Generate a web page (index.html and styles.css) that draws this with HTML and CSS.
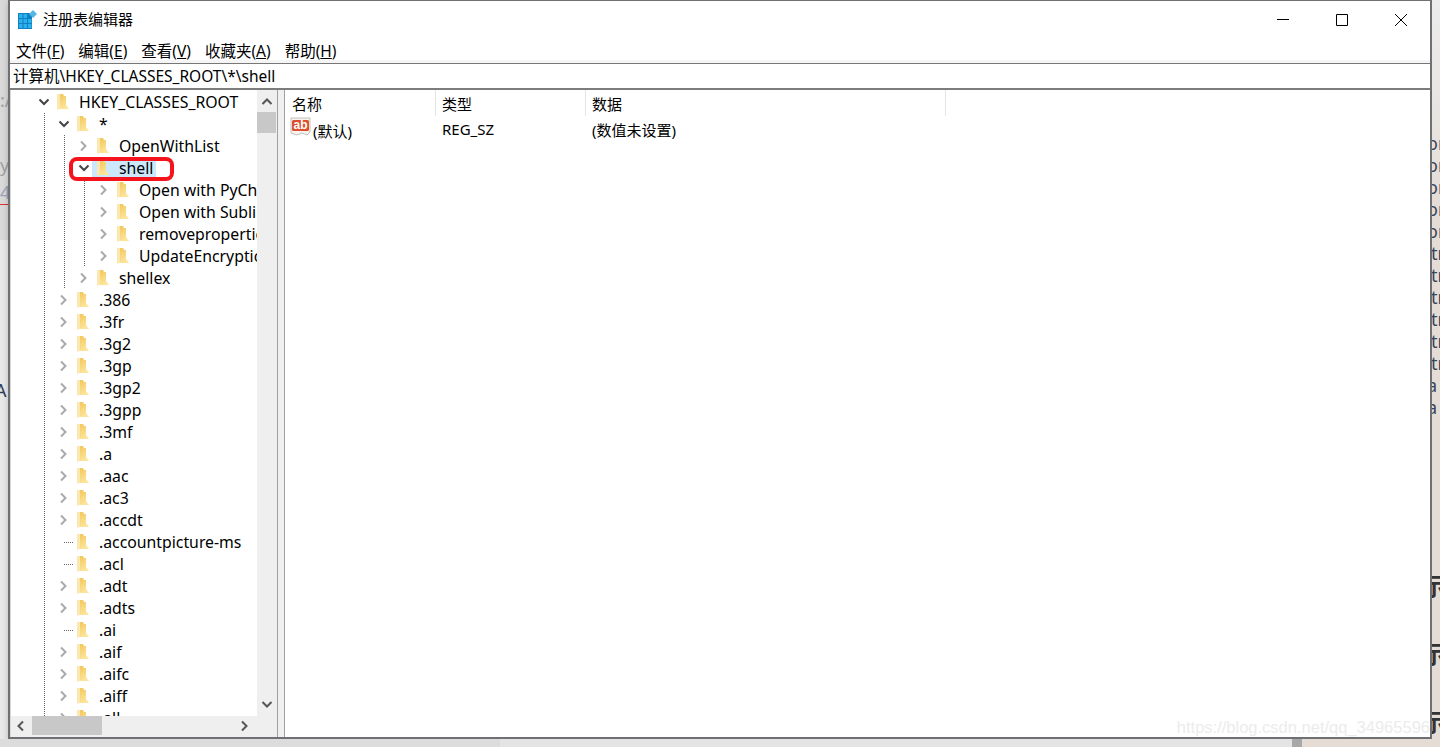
FILE: index.html
```html
<!DOCTYPE html>
<html lang="zh-CN">
<head>
  <meta charset="UTF-8" />
  <title>注册表编辑器</title>
  <link rel="stylesheet" href="styles.css">
</head>
<body>

  <svg class="sprites" width="0" height="0">
    <linearGradient id="folderFill" x1="0" y1="0" x2="0.4" y2="1">
      <stop offset="0" stop-color="#f2c75c"/>
      <stop offset="1" stop-color="#fde59c"/>
    </linearGradient>
    <symbol id="folder" viewBox="0 0 12 20">
      <path d="M0 2h6l1 2v13H1.500L0 18.500z" fill="#fbe7b0"/>
      <path d="M3 17V2h3l1 2h2v9l3 4z" fill="url(#folderFill)"/>
    </symbol>
    <symbol id="open" viewBox="0 0 12 12"><path d="M1.500 3.500 6 8l4.500-4.500" fill="none" stroke="#444" stroke-width="2"/></symbol>
    <symbol id="closed" viewBox="0 0 12 12"><path d="M3 1.500 7.500 6 3 10.500" fill="none" stroke="#aaa" stroke-width="2"/></symbol>
  </svg>

  <div class="desk">
    <div class="strip strip-left">
      <p>:/</p><p class="y">y</p><p class="typo">4i</p><p class="letter-a">A</p>
    </div>

    <div class="window">
      <div class="titlebar">
        <svg class="app-icon" viewBox="0 0 20 20">
          <path d="M0 3h14v16H0z" fill="#0f80c1"/>
          <path d="M1 4h3.500v4H1zM5.500 4H9v4H5.500zM1 9h3.500v4H1zM5.500 9H9v4H5.500zM10 9h3.500v4H10zM1 14h3.500v4H1zM5.500 14H9v4H5.500zM10 14h3.500v4H10z" fill="#2bb0ec"/>
          <path d="M15 0l4 4-4 4-4-4z" fill="#55b5e5"/>
        </svg>
        <span class="title">注册表编辑器</span>
        <div class="win-buttons">
          <svg viewBox="0 0 12 12"><path d="M0 5.500h12" stroke="#000"/></svg>
          <svg viewBox="0 0 12 12"><path d="M.5.500h11v11H.5z" fill="none" stroke="#000"/></svg>
          <svg viewBox="0 0 12 12"><path d="M0 0l12 12M12 0L0 12" stroke="#000"/></svg>
        </div>
      </div>

      <div class="menubar">
        <span class="menu">文件(<u>F</u>)</span>
        <span class="menu">编辑(<u>E</u>)</span>
        <span class="menu">查看(<u>V</u>)</span>
        <span class="menu">收藏夹(<u>A</u>)</span>
        <span class="menu">帮助(<u>H</u>)</span>
      </div>

      <div class="address">计算机\HKEY_CLASSES_ROOT\*\shell</div>

      <div class="panes">
        <div class="tree-pane">
          <div class="tree-main">
            <div class="tree">
              <div class="row"><svg class="chev"><use href="#open"/></svg><svg class="folder"><use href="#folder"/></svg><span class="label">HKEY_CLASSES_ROOT</span></div>
              <div class="row"><i class="guide"></i><svg class="chev"><use href="#open"/></svg><svg class="folder"><use href="#folder"/></svg><span class="label">*</span></div>
              <div class="row"><i class="guide"></i><i class="guide"></i><svg class="chev"><use href="#closed"/></svg><svg class="folder"><use href="#folder"/></svg><span class="label">OpenWithList</span></div>
              <div class="row"><i class="guide"></i><i class="guide"></i><svg class="chev"><use href="#open"/></svg><span class="sel"><svg class="folder"><use href="#folder"/></svg><span class="label">shell</span></span><div class="redbox"></div></div>
              <div class="row"><i class="guide"></i><i class="guide"></i><i class="guide"></i><svg class="chev"><use href="#closed"/></svg><svg class="folder"><use href="#folder"/></svg><span class="label">Open with PyCharm</span></div>
              <div class="row"><i class="guide"></i><i class="guide"></i><i class="guide"></i><svg class="chev"><use href="#closed"/></svg><svg class="folder"><use href="#folder"/></svg><span class="label">Open with Sublime Text</span></div>
              <div class="row"><i class="guide"></i><i class="guide"></i><i class="guide"></i><svg class="chev"><use href="#closed"/></svg><svg class="folder"><use href="#folder"/></svg><span class="label">removeproperties</span></div>
              <div class="row"><i class="guide"></i><i class="guide"></i><i class="guide"></i><svg class="chev"><use href="#closed"/></svg><svg class="folder"><use href="#folder"/></svg><span class="label">UpdateEncryptionSettings</span></div>
              <div class="row"><i class="guide"></i><i class="guide"></i><svg class="chev"><use href="#closed"/></svg><svg class="folder"><use href="#folder"/></svg><span class="label">shellex</span></div>
              <div class="row"><i class="guide"></i><svg class="chev"><use href="#closed"/></svg><svg class="folder"><use href="#folder"/></svg><span class="label">.386</span></div>
              <div class="row"><i class="guide"></i><svg class="chev"><use href="#closed"/></svg><svg class="folder"><use href="#folder"/></svg><span class="label">.3fr</span></div>
              <div class="row"><i class="guide"></i><svg class="chev"><use href="#closed"/></svg><svg class="folder"><use href="#folder"/></svg><span class="label">.3g2</span></div>
              <div class="row"><i class="guide"></i><svg class="chev"><use href="#closed"/></svg><svg class="folder"><use href="#folder"/></svg><span class="label">.3gp</span></div>
              <div class="row"><i class="guide"></i><svg class="chev"><use href="#closed"/></svg><svg class="folder"><use href="#folder"/></svg><span class="label">.3gp2</span></div>
              <div class="row"><i class="guide"></i><svg class="chev"><use href="#closed"/></svg><svg class="folder"><use href="#folder"/></svg><span class="label">.3gpp</span></div>
              <div class="row"><i class="guide"></i><svg class="chev"><use href="#closed"/></svg><svg class="folder"><use href="#folder"/></svg><span class="label">.3mf</span></div>
              <div class="row"><i class="guide"></i><svg class="chev"><use href="#closed"/></svg><svg class="folder"><use href="#folder"/></svg><span class="label">.a</span></div>
              <div class="row"><i class="guide"></i><svg class="chev"><use href="#closed"/></svg><svg class="folder"><use href="#folder"/></svg><span class="label">.aac</span></div>
              <div class="row"><i class="guide"></i><svg class="chev"><use href="#closed"/></svg><svg class="folder"><use href="#folder"/></svg><span class="label">.ac3</span></div>
              <div class="row"><i class="guide"></i><svg class="chev"><use href="#closed"/></svg><svg class="folder"><use href="#folder"/></svg><span class="label">.accdt</span></div>
              <div class="row"><i class="guide"></i><span class="leaf"></span><svg class="folder"><use href="#folder"/></svg><span class="label">.accountpicture-ms</span></div>
              <div class="row"><i class="guide"></i><span class="leaf"></span><svg class="folder"><use href="#folder"/></svg><span class="label">.acl</span></div>
              <div class="row"><i class="guide"></i><svg class="chev"><use href="#closed"/></svg><svg class="folder"><use href="#folder"/></svg><span class="label">.adt</span></div>
              <div class="row"><i class="guide"></i><svg class="chev"><use href="#closed"/></svg><svg class="folder"><use href="#folder"/></svg><span class="label">.adts</span></div>
              <div class="row"><i class="guide"></i><span class="leaf"></span><svg class="folder"><use href="#folder"/></svg><span class="label">.ai</span></div>
              <div class="row"><i class="guide"></i><svg class="chev"><use href="#closed"/></svg><svg class="folder"><use href="#folder"/></svg><span class="label">.aif</span></div>
              <div class="row"><i class="guide"></i><svg class="chev"><use href="#closed"/></svg><svg class="folder"><use href="#folder"/></svg><span class="label">.aifc</span></div>
              <div class="row"><i class="guide"></i><svg class="chev"><use href="#closed"/></svg><svg class="folder"><use href="#folder"/></svg><span class="label">.aiff</span></div>
              <div class="row"><i class="guide"></i><svg class="chev"><use href="#closed"/></svg><svg class="folder"><use href="#folder"/></svg><span class="label">.all</span></div>
            </div>
            <div class="vscroll">
              <svg viewBox="0 0 12 12"><path d="M1.500 8 6 3.500 10.500 8" fill="none" stroke="#555" stroke-width="2"/></svg>
              <div class="vthumb"></div>
              <svg class="vdown" viewBox="0 0 12 12"><path d="M1.500 4 6 8.500 10.500 4" fill="none" stroke="#555" stroke-width="2"/></svg>
            </div>
          </div>
          <div class="hscroll">
            <svg viewBox="0 0 12 12"><path d="M8 1.500 3.500 6 8 10.500" fill="none" stroke="#555" stroke-width="2"/></svg>
            <div class="hthumb"></div>
            <svg class="hright" viewBox="0 0 12 12"><path d="M4 1.500 8.500 6 4 10.500" fill="none" stroke="#555" stroke-width="2"/></svg>
          </div>
        </div>

        <div class="list-pane">
          <div class="list-head">
            <span class="col col-name">名称</span>
            <span class="col col-type">类型</span>
            <span class="col col-data">数据</span>
          </div>
          <div class="list-row">
            <span class="cell col-name">
              <svg class="ab-icon" viewBox="0 0 22 20">
                <path d="M1 1h19v14l-3 3-5-2-5 2-6-2z" fill="#f7f3ef" stroke="#c4bfba"/>
                <rect x="2" y="3" width="17" height="11" rx="1.500" fill="#dc4f2e"/>
                <text x="3.500" y="12" class="ab-text">ab</text>
              </svg>(默认)
            </span>
            <span class="cell col-type">REG_SZ</span>
            <span class="cell col-data">(数值未设置)</span>
          </div>
          <div class="watermark">https://blog.csdn.net/qq_34965596</div>
        </div>
      </div>
    </div>

    <div class="strip strip-right">
      <div class="lines">
        <p class="cut">or</p><p class="cut">or</p><p class="cut">or</p><p class="cut">or</p><p class="cut">or</p>
        <p>tr</p><p>tr</p><p>tr</p><p>tr</p><p>tr</p><p>tr</p>
        <p class="cut">a</p><p class="cut">a</p>
      </div>
      <div class="heads">
        <p>示</p><p>示</p><p>示</p>
      </div>
    </div>
  </div>

  <div class="under">
    <div class="under-left"></div>
    <div class="under-mid"></div>
    <div class="under-bar"></div>
    <div class="under-right"></div>
  </div>

</body>
</html>
```

FILE: styles.css
```css
* { box-sizing: border-box; }
html, body {
  margin: 0;
  padding: 0;
  height: 747px;
  overflow: hidden;
}
body {
  font-family: "Noto Sans", "Noto Sans CJK SC", sans-serif;
  font-size: 15px;
  color: #000;
  background: #e4dcd5;
}
.sprites { position: absolute; }
.desk {
  display: flex;
  height: 739px;
}

/* page behind the window */
.strip { overflow: hidden; }
.strip p { margin: 0; }
.strip-left {
  width: 8px;
  flex: none;
  background: linear-gradient(#d9d9d9 240px, #e8e8e8 240px);
  padding-top: 88px;
  font-size: 18px;
  color: #a0a0a0;
}
.strip-left p { height: 24px; line-height: 24px; }
.strip-left .y { margin-top: 41px; }
.strip-left .typo {
  margin-top: 3px;
  height: 25px;
  color: #9aa3b8;
  border-bottom: 1px solid #e03030;
}
.strip-left .letter-a { margin-top: 173px; margin-left: -5px; color: #2f3f58; }
.strip-right {
  width: 9px;
  flex: none;
  background: linear-gradient(#ececec, #e4dcd5 30%);
}
.lines { padding-top: 132px; font-size: 18px; color: #36465e; }
.lines p { height: 22px; line-height: 22px; margin-left: -1px; }
.lines .cut { margin-left: -5px; }
.heads { padding-top: 134px; font-size: 24px; font-weight: 700; color: #333; }
.heads p { height: 68px; line-height: 68px; margin-left: -10px; }

/* window */
.window {
  width: 1424px;
  flex: none;
  display: flex;
  flex-direction: column;
  background: #fff;
  border: 2px solid #6e7073;
  border-top-width: 1px;
  box-shadow: 0 2px 6px rgba(0, 0, 0, 0.2);
}
.titlebar {
  height: 37px;
  flex: none;
  display: flex;
  align-items: center;
  padding-left: 8px;
}
.app-icon { width: 20px; height: 20px; margin-right: 5px; }
.title { font-size: 15px; padding-bottom: 2px; }
.win-buttons {
  margin-left: auto;
  display: flex;
  align-items: center;
  gap: 47px;
  padding-right: 23px;
}
.win-buttons svg { width: 12px; height: 12px; }
.menubar {
  height: 26px;
  flex: none;
  display: flex;
  align-items: center;
  padding-left: 6px;
  background: linear-gradient(#fff 22px, #f5f5f5 22px);
  border-bottom: 1px solid #777;
  gap: 14px;
}
.menu { font-size: 15.500px; line-height: 20px; }
.address {
  height: 26px;
  flex: none;
  padding-left: 3px;
  line-height: 24px;
  font-size: 15.500px;
  border-bottom: 2px solid #7c7c7c;
  white-space: nowrap;
}
.panes {
  flex: 1;
  display: flex;
  min-height: 0;
  background: #f0f0f0;
}

/* left tree */
.tree-pane {
  width: 268px;
  flex: none;
  display: flex;
  flex-direction: column;
  border-right: 1px solid #a0a0a0;
  border-left: 1px solid #d8d8d8;
  padding-bottom: 2px;
  background: #efefef;
}
.tree-main {
  flex: 1;
  display: flex;
  min-height: 0;
}
.tree {
  flex: 1;
  min-width: 0;
  background: #fff;
  overflow: hidden;
  padding-left: 23px;
  padding-top: 1px;
}
.row {
  position: relative;
  height: 22px;
  display: flex;
  align-items: center;
  white-space: nowrap;
}
.guide {
  width: 20px;
  height: 22px;
  flex: none;
  background: linear-gradient(#666 50%, transparent 50%) 10px 0 / 1px 2px repeat-y;
}
.chev {
  width: 12px;
  height: 12px;
  margin: 0 4px;
  flex: none;
}
.leaf {
  width: 20px;
  height: 1px;
  flex: none;
  padding-left: 10px;
  background: linear-gradient(90deg, #666 50%, transparent 50%) 0 0 / 2px 1px repeat-x;
  background-clip: content-box;
}
.folder {
  width: 12px;
  height: 20px;
  flex: none;
  margin-left: 3px;
}
.label {
  margin-left: 10px;
  font-size: 15.800px;
  line-height: 22px;
}
.sel {
  display: flex;
  align-items: center;
  height: 18px;
  margin-left: -2px;
  padding: 0 3px 0 2px;
  background: #cce8ff;
}
.sel .label { line-height: 18px; }
.redbox {
  position: absolute;
  left: 35px;
  top: 0;
  width: 105px;
  height: 24px;
  border: 4px solid #f5141c;
  border-radius: 8px;
}
.vscroll {
  width: 19px;
  flex: none;
  margin-right: 1px;
  display: flex;
  flex-direction: column;
  align-items: center;
  padding-top: 6px;
}
.vscroll svg { width: 12px; height: 12px; flex: none; }
.vthumb {
  width: 100%;
  height: 21px;
  margin-top: 4px;
  background: #c8c8c8;
}
.vdown { margin-top: auto; margin-bottom: 6px; }
.hscroll {
  height: 19px;
  flex: none;
  display: flex;
  align-items: center;
  padding: 0 27px 0 4px;
}
.hscroll svg { width: 12px; height: 12px; flex: none; }
.hthumb {
  width: 70px;
  height: 100%;
  margin-left: 5px;
  background: #c8c8c8;
}
.hright { margin-left: auto; }

/* right list */
.list-pane {
  position: relative;
  flex: 1;
  margin-left: 6px;
  border-left: 1px solid #a0a0a0;
  background: #fff;
}
.list-head {
  height: 26px;
  display: flex;
  align-items: center;
  font-size: 15px;
}
.col { height: 100%; display: flex; align-items: center; flex: none; }
.col-name { width: 151px; padding-left: 7px; }
.col-type { width: 150px; padding-left: 6px; }
.col-data { width: 360px; padding-left: 6px; }
.list-head .col { border-right: 1px solid #e5e5e5; }
.list-row {
  height: 22px;
  margin-top: 2px;
  display: flex;
  align-items: center;
  font-size: 15px;
}
.cell { white-space: nowrap; }
.list-row .col-name { padding-left: 5px; }
.ab-icon { width: 22px; height: 20px; margin-right: 1px; }
.ab-text { font-family: "Liberation Sans", sans-serif; font-size: 12px; font-weight: 700; fill: #fff; }
.watermark {
  position: absolute;
  right: 0;
  bottom: 0;
  font-family: "Liberation Sans", sans-serif;
  font-size: 16.500px;
  color: #ececec;
  white-space: nowrap;
}

/* below the window */
.under { display: flex; height: 8px; }
.under-left { width: 500px; background: #dcdcdc; }
.under-mid { width: 792px; background: #e4e4e4; }
.under-bar { width: 10px; background: #a8a8a8; }
.under-right { flex: 1; background: #e4dcd5; }
```
